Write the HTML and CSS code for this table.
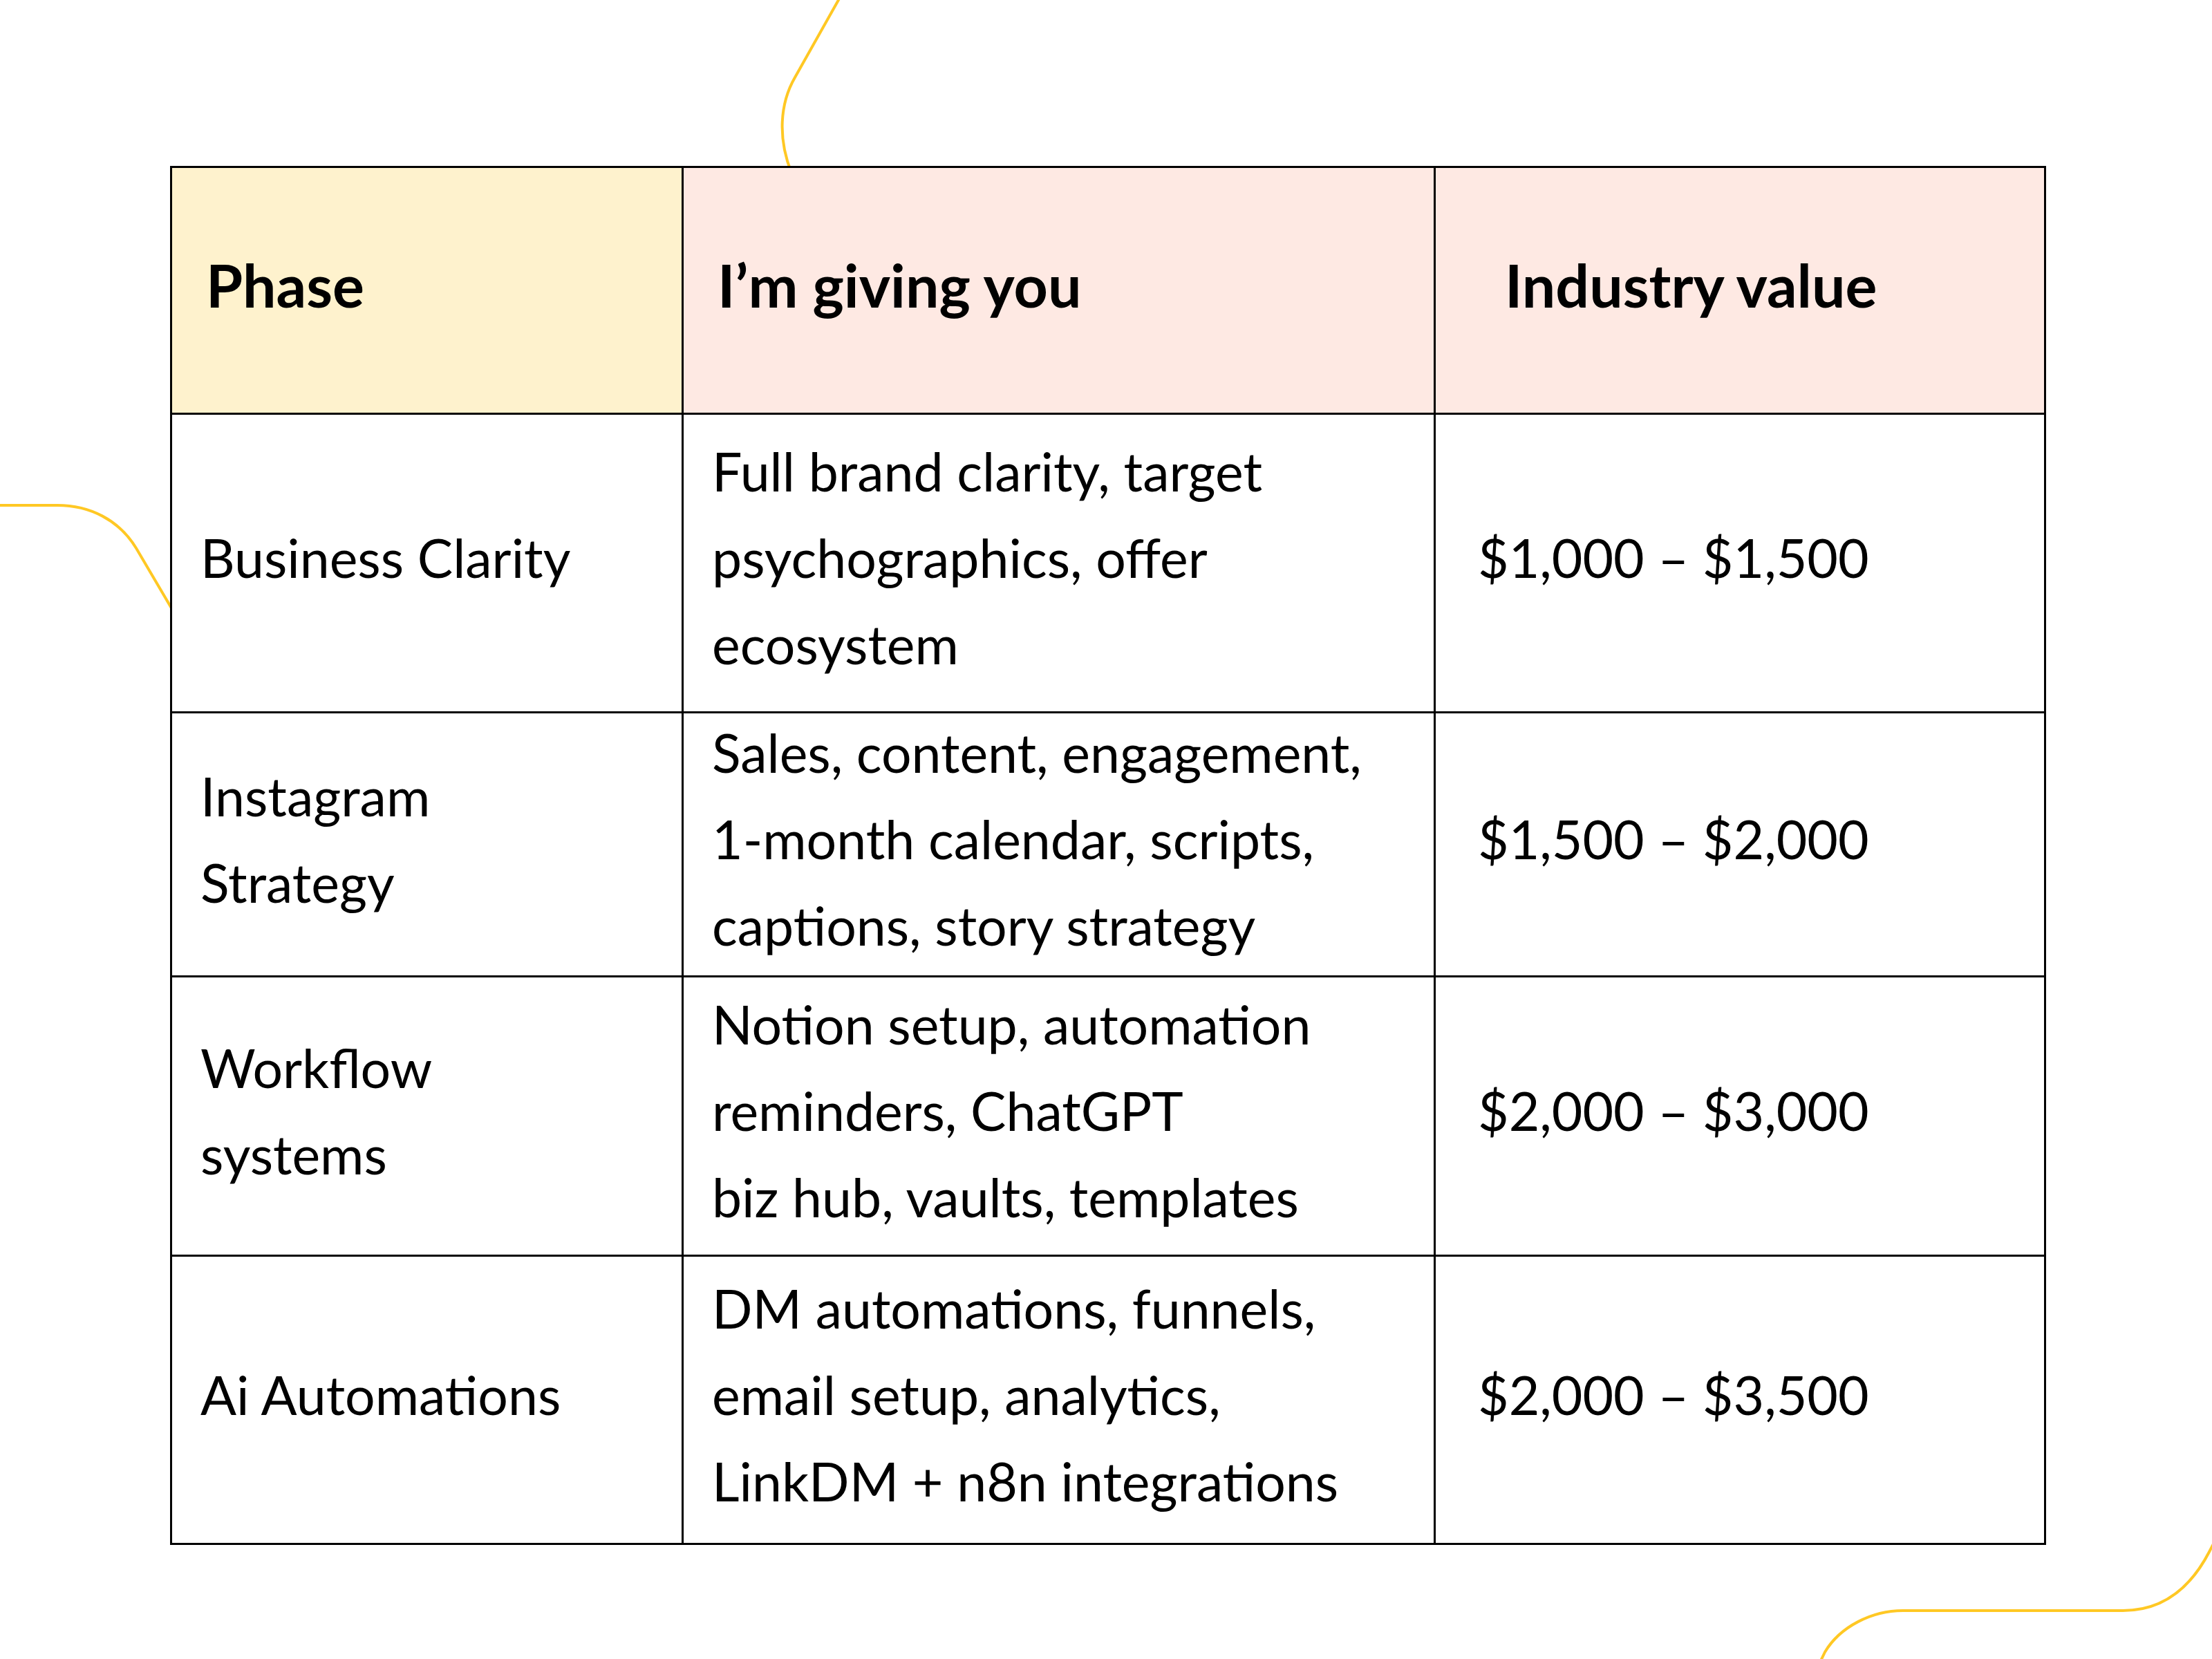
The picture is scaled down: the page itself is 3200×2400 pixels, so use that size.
FILE: index.html
```html
<!DOCTYPE html>
<html lang="en">
<head>
<meta charset="utf-8">
<title>Phase value table</title>
<link rel="stylesheet" href="styles.css">
</head>
<body>
<div class="canvas">
  <svg class="deco" width="3200" height="2400" viewBox="0 0 3200 2400" aria-hidden="true">
    <path d="M1240 -48 L1150 112 C1128 150 1125 200 1145 250 L1160 300" />
    <path d="M-10 731 L83 731 C130 731 172 752 197 793 L260 900" />
    <path d="M3240 2160 L3196 2245 C3170 2295 3130 2330 3071 2330 L2753 2330 C2708 2330 2662 2353 2640 2390 L2628 2415" />
  </svg>
  <table class="value-table">
    <colgroup>
      <col class="c-phase">
      <col class="c-give">
      <col class="c-value">
    </colgroup>
    <thead>
      <tr class="row-head">
        <th class="h-phase"><div class="cell">Phase</div></th>
        <th class="h-give"><div class="cell">I’m giving you</div></th>
        <th class="h-value"><div class="cell">Industry value</div></th>
      </tr>
    </thead>
    <tbody>
      <tr class="row-1">
        <td class="d-phase"><div class="cell">Business Clarity</div></td>
        <td class="d-give"><div class="cell">Full brand clarity, target<br>psychographics, offer<br>ecosystem</div></td>
        <td class="d-value"><div class="cell">$1,000 – $1,500</div></td>
      </tr>
      <tr class="row-2">
        <td class="d-phase"><div class="cell">Instagram<br>Strategy</div></td>
        <td class="d-give"><div class="cell">Sales, content, engagement,<br>1-month calendar, scripts,<br>captions, story strategy</div></td>
        <td class="d-value"><div class="cell">$1,500 – $2,000</div></td>
      </tr>
      <tr class="row-3">
        <td class="d-phase"><div class="cell">Workflow<br>systems</div></td>
        <td class="d-give"><div class="cell">Notion setup, automation<br>reminders, ChatGPT<br>biz hub, vaults, templates</div></td>
        <td class="d-value"><div class="cell">$2,000 – $3,000</div></td>
      </tr>
      <tr class="row-4">
        <td class="d-phase"><div class="cell">Ai Automations</div></td>
        <td class="d-give"><div class="cell">DM automations, funnels,<br>email setup, analytics,<br>LinkDM + n8n integrations</div></td>
        <td class="d-value"><div class="cell">$2,000 – $3,500</div></td>
      </tr>
    </tbody>
  </table>
</div>
</body>
</html>
```

FILE: styles.css
```css
html, body {
  margin: 0;
  padding: 0;
  background: #ffffff;
}

body {
  font-family: "Lato", "Noto Sans", "Liberation Sans", sans-serif;
  color: #000000;
}

.canvas {
  position: relative;
  width: 3200px;
  height: 2400px;
  overflow: hidden;
  padding: 240px 0 0 246px;
  box-sizing: border-box;
}

.deco {
  position: absolute;
  left: 0;
  top: 0;
  z-index: 0;
}

.deco path {
  fill: none;
  stroke: #ffc824;
  stroke-width: 4;
  stroke-linecap: round;
  stroke-linejoin: round;
}

.value-table {
  position: relative;
  z-index: 1;
  border-collapse: collapse;
  table-layout: fixed;
  width: 2711px;
  background: #ffffff;
  border: 3px solid #000000;
}

.c-phase { width: 740px; }
.c-give { width: 1088px; }
.c-value { width: 883px; }

.value-table th,
.value-table td {
  border: 3px solid #000000;
  vertical-align: middle;
  text-align: left;
  padding-top: 0;
  padding-bottom: 0;
}

.cell {
  margin-top: -16px;
}

.value-table th {
  font-weight: 700;
  font-size: 86px;
  line-height: 100px;
}

.value-table td {
  font-weight: 400;
  font-size: 77px;
  line-height: 125px;
}

.h-phase {
  background: #fef2cd;
  padding-left: 49px;
}

.h-give {
  background: #fee9e3;
  padding-left: 49px;
}

.h-value {
  background: #fee9e3;
  padding-left: 100px;
}

.d-phase { padding-left: 41px; }
.d-give { padding-left: 41px; }
.d-value { padding-left: 61px; }

.row-head { height: 357px; }
.row-1 { height: 432px; }
.row-2 { height: 382px; }
.row-3 { height: 404px; }
.row-4 { height: 417px; }
```
